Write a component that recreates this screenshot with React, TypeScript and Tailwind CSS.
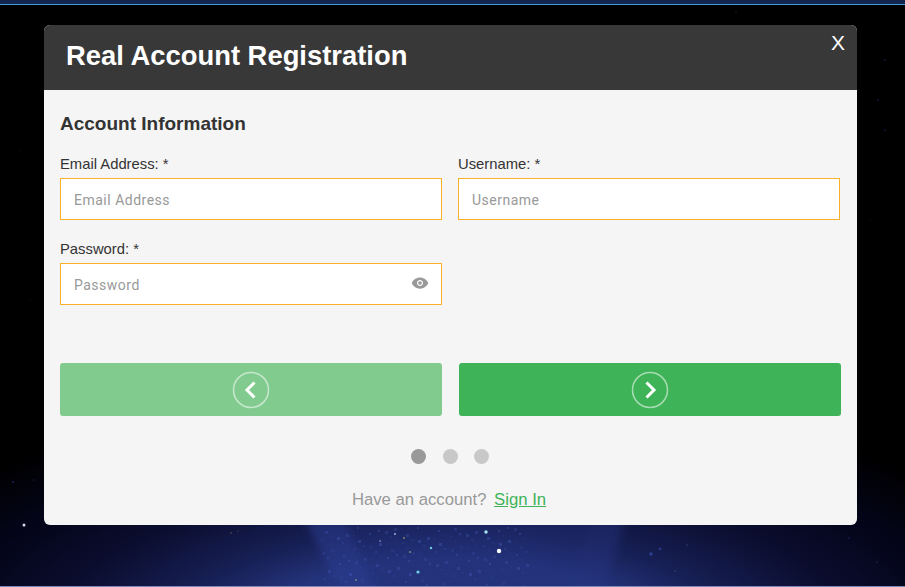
const stars: [number, number, number, string][] = [
  [24, 525, 1.5, "#d8dcf0"], [499, 551, 2.2, "#f4f8ff"], [486, 532, 1.7, "#a8e4f4"], [418, 572, 1.6, "#70d0e8"],
  [431, 548, 1.2, "#70c8e0"], [395, 534, 1, "#a0b0e0"], [380, 541, 0.8, "#a0b0d8"], [410, 552, 0.8, "#c8c878"],
  [231, 533, 0.7, "#706850"], [238, 531, 0.6, "#605848"], [356, 580, 0.8, "#a0c080"], [404, 538, 0.8, "#c8c060"],
  [675, 571, 0.6, "#806060"], [687, 545, 0.6, "#606088"], [651, 554, 1.8, "#2c3c90"], [660, 549, 1.4, "#283484"],
  [885, 60, 0.7, "#26307a"], [878, 100, 0.7, "#1c2458"], [736, 12, 0.7, "#1c2458"], [20, 150, 0.6, "#141a40"],
  [30, 300, 0.6, "#141a40"], [870, 220, 0.6, "#141a40"], [885, 130, 0.8, "#1c2458"], [13, 482, 1, "#181e58"],
  [34, 480, 0.8, "#181e58"], [849, 538, 0.8, "#20286a"], [877, 562, 0.8, "#20286a"], [10, 543, 0.6, "#141a40"],
];

// dense speckle for the bright part of the nebula
const specks = Array.from({ length: 170 }, (_, i) => ({
  x: 320 + ((i * 97) % 210),
  y: 526 + ((i * 61) % 60),
  w: 1 + (i % 3),
  o: 0.15 + ((i * 7) % 10) / 30,
}));

function Stars() {
  return (
    <svg className="pointer-events-none absolute inset-0" width="905" height="587" viewBox="0 0 905 587">
      <g className="blur-[4px]">
        <polygon points="305,520 345,520 375,590 340,590" fill="#2c3c90" fillOpacity="0.55" />
        <polygon points="590,520 625,520 605,590 570,590" fill="#26347e" fillOpacity="0.45" />
        <polygon points="345,520 590,520 570,590 375,590" fill="#22327c" fillOpacity="0.35" />
      </g>
      {specks.map((s, i) => (
        <rect key={i} x={s.x} y={s.y} width={s.w} height={s.w} fill="#3f55b0" fillOpacity={s.o} />
      ))}
      {stars.map(([x, y, r, c], i) => (
        <circle key={i} cx={x} cy={y} r={r} fill={c} />
      ))}
    </svg>
  );
}

function Field({ label, placeholder, eye }: { label: string; placeholder: string; eye?: boolean }) {
  return (
    <div className="flex w-[382px] flex-col">
      <label className="mb-[4px] h-[19px] text-[14.8px] leading-[19px] text-[#333]">{label}</label>
      <div className="flex h-[42px] items-center justify-between border border-[#fbb02a] bg-white pl-[13px] pr-[12px]">
        <span className="mt-[2px] font-['Roboto',sans-serif] text-[14px] tracking-[0.5px] text-[#999]">{placeholder}</span>
        {eye && (
          <svg width="18" height="18" viewBox="0 0 24 24" fill="#999" className="-mt-[3px]">
            <path d="M12 4.5C7 4.5 2.73 7.61 1 12c1.73 4.39 6 7.5 11 7.5s9.27-3.11 11-7.5c-1.73-4.39-6-7.5-11-7.5zM12 16c-2.2 0-4-1.8-4-4s1.8-4 4-4 4 1.8 4 4-1.8 4-4 4zm0-6.4c-1.33 0-2.4 1.07-2.4 2.4s1.07 2.4 2.4 2.4 2.4-1.07 2.4-2.4-1.07-2.4-2.4-2.4z" />
          </svg>
        )}
      </div>
    </div>
  );
}

function ArrowButton({ dir, faded }: { dir: "left" | "right"; faded?: boolean }) {
  return (
    <button className={`flex h-[53px] w-[382px] items-center justify-center rounded-[3px] ${faded ? "bg-[#81cb8f]" : "bg-[#3eb358]"}`}>
      <svg width="38" height="38" viewBox="0 0 38 38" fill="none">
        <circle cx="19" cy="19" r="17.5" stroke="#ffffff" strokeOpacity="0.55" strokeWidth="1.5" />
        <path
          d={dir === "left" ? "M22.5 11.5 15 19l7.5 7.5" : "M15.5 11.5 23 19l-7.5 7.5"}
          stroke="#fff"
          strokeWidth="3"
        />
      </svg>
    </button>
  );
}

export default function App() {
  return (
    <div className="relative h-[587px] w-[905px] overflow-hidden bg-[radial-gradient(ellipse_500px_200px_at_450px_640px,#24347c_40%,#172056_56%,#0b0d2e_80%,#04051a_100%,#000000_125%)] font-['Liberation_Sans',Arial,sans-serif]">
      <Stars />
      {/* top strip */}
      <div className="relative h-[5px] border-b border-[#3f9fd0] bg-[#14264f]" />

      {/* modal */}
      <div className="relative ml-[44px] mt-[20px] h-[500px] w-[813px] overflow-hidden rounded-[6px] bg-[#f5f5f5]">
        <div className="flex h-[65px] items-start justify-between bg-[#383838] pl-[22px] pr-[12px] text-white">
          <h1 className="mt-[14px] text-[27.4px] font-bold leading-[33px]">Real Account Registration</h1>
          <span className="mt-[5px] text-[21px] leading-[26px]">X</span>
        </div>

        <div className="px-[16px]">
          <h2 className="mt-[23px] text-[19px] font-bold leading-[22px] text-[#333]">Account Information</h2>

          <div className="mt-[20px] grid grid-cols-[382px_382px] gap-x-[16px] gap-y-[20px]">
            <Field label="Email Address: *" placeholder="Email Address" />
            <Field label="Username: *" placeholder="Username" />
            <Field label="Password: *" placeholder="Password" eye />
          </div>

          <div className="mt-[58px] flex gap-[17px]">
            <ArrowButton dir="left" faded />
            <ArrowButton dir="right" />
          </div>

          <div className="mt-[33px] flex items-center justify-center gap-[16.5px] pr-[1px]">
            <span className="size-[15px] rounded-full bg-[#999]" />
            <span className="size-[15px] rounded-full bg-[#c8c8c8]" />
            <span className="size-[15px] rounded-full bg-[#c8c8c8]" />
          </div>

          <p className="mt-[26px] pr-[3px] text-center text-[16.7px] leading-[20px] text-[#999]">
            Have an account?{" "}
            <a className="ml-[3px] text-[#3eb358] underline">Sign In</a>
          </p>
        </div>
      </div>

      {/* bottom edge */}
      <div className="absolute bottom-0 left-0 h-px w-full bg-[#7f86b4]" />
    </div>
  );
}
